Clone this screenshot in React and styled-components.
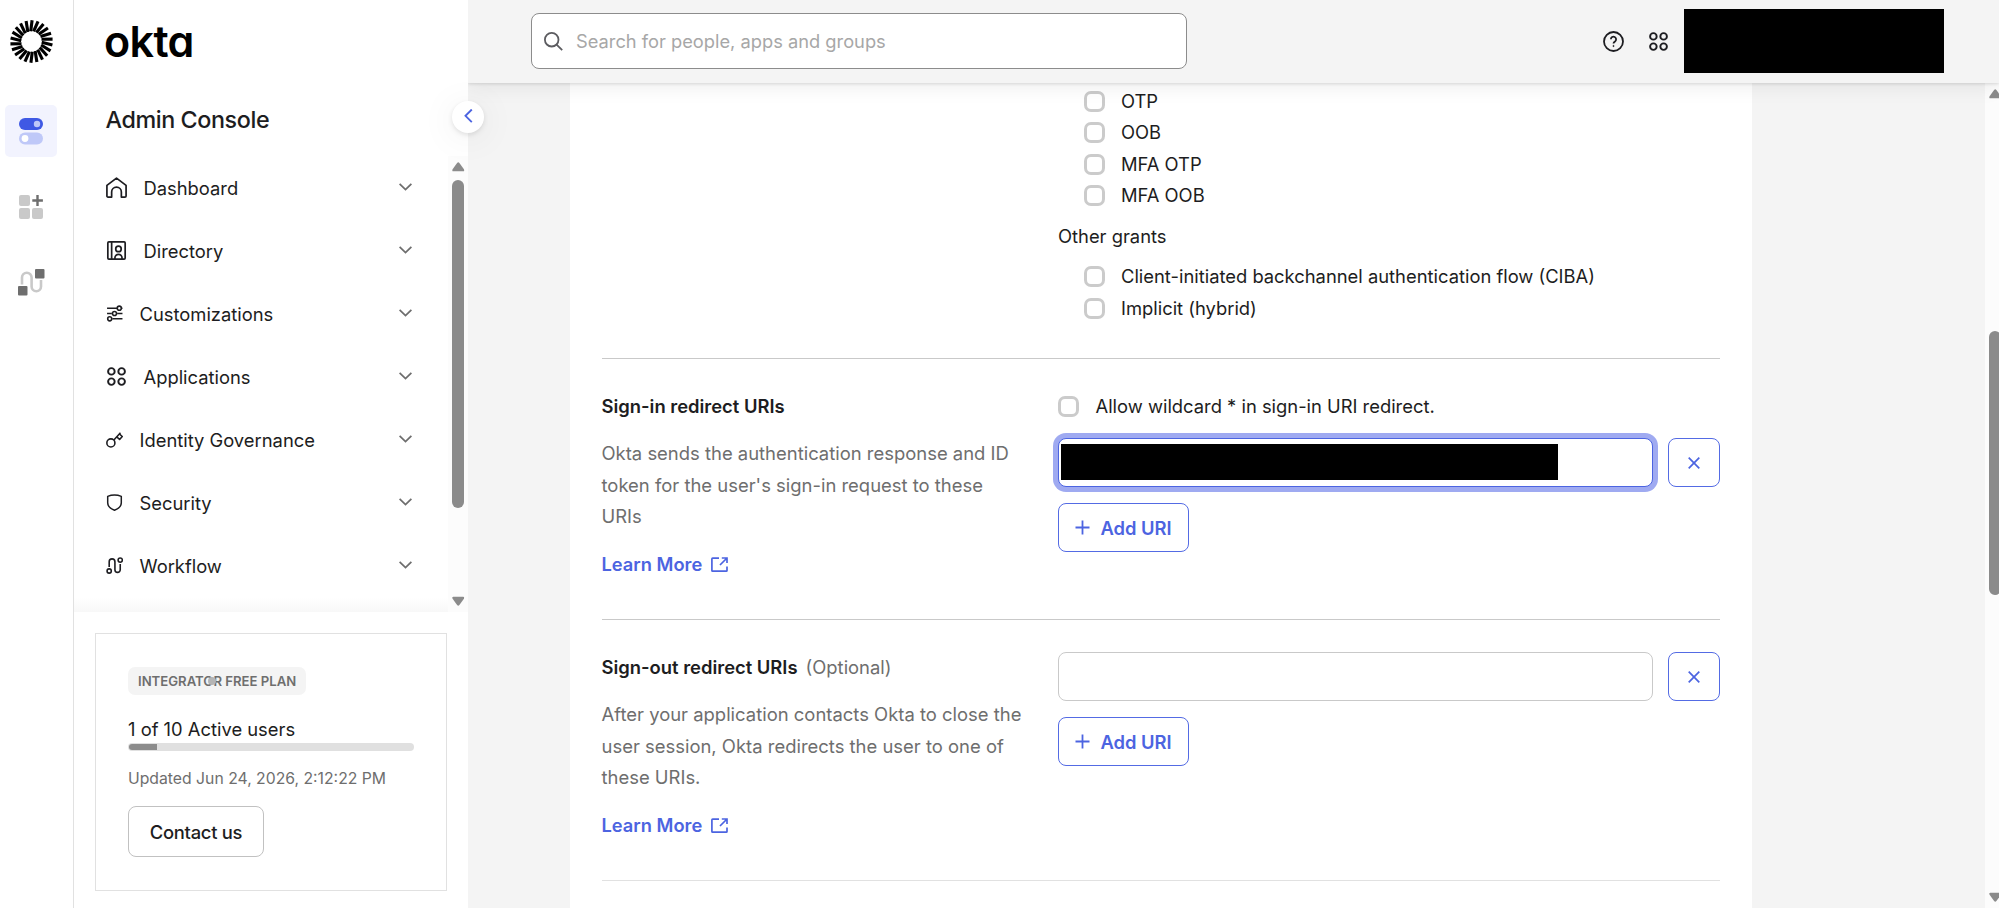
import React from "react";
import styled, { createGlobalStyle } from "styled-components";

const ink = "#1d1d21";
const muted = "#6e6e6e";
const blue = "#4c64e1";
const line = "#e1e1e1";

const GlobalStyle = createGlobalStyle`
  *, *::before, *::after { box-sizing: border-box; }
  html, body { margin: 0; overflow: hidden; }
  body {
    font-family: Inter, "Liberation Sans", sans-serif;
    font-size: 18.375px;
    line-height: 31.5px;
    color: ${ink};
    background: #f4f4f4;
  }
  svg { display: block; flex: none; }
`;

const Page = styled.div`
  position: relative;
  display: grid;
  grid-template-columns: 74px 394px 1fr;
  height: 100vh;
  overflow: hidden;
`;

/* Product rail */
const Rail = styled.aside`
  display: flex;
  flex-direction: column;
  align-items: flex-start;
  padding: 20px 0 0 5px;
  background: #fff;
  border-right: 1px solid ${line};
`;
const RailLogo = styled.div`
  margin: 0 0 42px 4.5px;
`;
const RailItem = styled.button`
  display: flex;
  align-items: center;
  justify-content: center;
  width: 52px;
  height: 52px;
  margin-bottom: 23.5px;
  padding: 0;
  border: 0;
  border-radius: 5px;
  background: ${(p) => (p.$active ? "#f2f3fe" : "transparent")};
`;

/* Side navigation */
const Sidebar = styled.aside`
  position: relative;
  z-index: 3;
  display: flex;
  flex-direction: column;
  min-width: 0;
  background: #fff;
`;
const Brand = styled.div`
  height: 83px;
  padding: 13px 0 0 30px;
  font-size: 43px;
  font-weight: 600;
  line-height: 56px;
  color: #000;
  letter-spacing: -0.6px;
  font-feature-settings: "cv11" 1, "ss01" 0;
`;
const ConsoleTitle = styled.h1`
  height: 73px;
  margin: 0;
  padding: 21px 0 0 31.5px;
  font-size: 23.3px;
  font-weight: 500;
  line-height: 32px;
  letter-spacing: -0.4px;
`;
const NavArea = styled.div`
  display: flex;
  height: 456px;
  overflow: hidden;
`;
const NavList = styled.nav`
  flex: 1;
  display: flex;
  flex-direction: column;
  background: linear-gradient(to top, #f8f8f8 0, #fff 14px);
`;
const NavItem = styled.a`
  display: flex;
  align-items: center;
  flex: none;
  gap: 16.5px;
  height: 63px;
  padding: 0 36px 0 32px;
`;
const NavLabel = styled.span`
  flex: 1;
  padding-top: 1.5px;
`;
const ScrollTrack = styled.div`
  display: flex;
  flex-direction: column;
  align-items: flex-start;
  flex: none;
  width: ${(p) => p.$width}px;
  padding: 6px 0 6px 4px;
  overflow: hidden;
  background: #fcfcfc;
`;
const ScrollThumb = styled.div`
  flex: none;
  width: 12px;
  height: ${(p) => p.$height}px;
  margin-top: ${(p) => p.$offset}px;
  margin-bottom: auto;
  border-radius: 6px;
  background: #8b8b8b;
`;

const PlanCard = styled.section`
  display: flex;
  flex-direction: column;
  align-items: flex-start;
  width: 352px;
  height: 258px;
  margin: 21px 0 0 21px;
  padding: 33px 32px;
  border: 1px solid ${line};
`;
const PlanTag = styled.div`
  position: relative;
  height: 28px;
  padding: 0 10px;
  border-radius: 7px;
  background: #f4f4f4;
  font-size: 13.15px;
  font-weight: 600;
  line-height: 28px;
  color: ${muted};
  white-space: nowrap;
`;
const TagDot = styled.span`
  position: absolute;
  top: 10px;
  left: 80px;
  width: 8px;
  height: 8px;
  border-radius: 50%;
  background: #b5b5b5;
`;
const UserCount = styled.div`
  height: 28px;
  margin-top: 20px;
  line-height: 29px;
`;
const Meter = styled.div`
  width: 286px;
  height: 8px;
  padding: 1px;
  border-radius: 4px;
  background: #e0e0e0;
`;
const MeterFill = styled.div`
  width: 28px;
  height: 6px;
  border-radius: 3px 0 0 3px;
  background: #8c8c8c;
`;
const Updated = styled.div`
  margin-top: 16px;
  font-size: 15.75px;
  line-height: 24px;
  color: ${muted};
`;
const ContactButton = styled.button`
  width: 136px;
  height: 53px;
  margin-top: 15px;
  padding: 0;
  border: 1px solid #c1c1c1;
  border-radius: 8px;
  background: #fff;
  color: ${ink};
  font: 500 18.375px Inter, sans-serif;
  letter-spacing: -0.25px;
`;
const CollapseButton = styled.button`
  position: absolute;
  z-index: 4;
  top: 100.5px;
  left: 452px;
  display: flex;
  align-items: center;
  justify-content: center;
  width: 32px;
  height: 32px;
  padding: 0;
  border: 0;
  border-radius: 50%;
  background: #fff;
  box-shadow: 0 2px 5px rgba(0, 0, 0, 0.1), 0 4px 36px rgba(0, 0, 0, 0.08);
`;

/* Main area */
const Main = styled.div`
  display: flex;
  flex-direction: column;
  min-width: 0;
  height: 908px;
`;
const Header = styled.header`
  position: relative;
  z-index: 2;
  display: flex;
  align-items: center;
  flex: none;
  height: 83px;
  padding: 0 55px 1.5px 63px;
  background: #f4f4f4;
  box-shadow: 0 1px 3px rgba(0, 0, 0, 0.12), 0 3px 20px rgba(0, 0, 0, 0.08);
`;
const SearchBox = styled.label`
  display: flex;
  align-items: center;
  gap: 13px;
  width: 656px;
  height: 56px;
  margin-top: 1px;
  margin-right: auto;
  padding-left: 12px;
  border: 1px solid #8c8c8c;
  border-radius: 8px;
  background: #fff;
`;
const SearchInput = styled.input`
  flex: 1;
  min-width: 0;
  padding: 0;
  border: 0;
  outline: 0;
  background: transparent;
  font: 400 18.3px Inter, sans-serif;
  &::placeholder { color: #a7a7a7; opacity: 1; }
`;
const HeaderIcons = styled.div`
  display: flex;
  align-items: center;
  gap: 24px;
  margin-top: 1px;
  margin-right: 15px;
`;
const AccountBlock = styled.div`
  width: 260px;
  height: 64px;
  background: #000;
`;
const Body = styled.div`
  display: flex;
  flex: 1;
  min-height: 0;
  padding-left: 102px;
`;
const Panel = styled.main`
  flex: none;
  width: 1181.5px;
  margin-right: auto;
  padding: 0 31.5px;
  overflow: hidden;
  background: #fff;
`;
const Section = styled.section`
  display: grid;
  grid-template-columns: 425px 662px;
  justify-content: space-between;
  align-items: start;
  height: ${(p) => p.$height}px;
  padding-top: ${(p) => p.$top}px;
  border-bottom: 1px solid ${(p) => (p.$faint ? "#e1e1e1" : "#c9c9c9")};
`;
const Field = styled.div`
  display: flex;
  flex-direction: column;
  align-items: flex-start;
`;
const CheckList = styled.div`
  padding-left: 25.5px;
`;
const CheckRow = styled.label`
  display: flex;
  align-items: center;
  gap: 16.5px;
  height: 31.5px;
`;
const Box = styled.span`
  flex: none;
  width: 21px;
  height: 21px;
  border: 3px solid #cbcbcb;
  border-radius: 7px;
  background: #fff;
`;
const GroupLabel = styled.div`
  margin: 9px 0;
`;
const FieldTitle = styled.h2`
  margin: 0 0 15.75px;
  font-size: 18.4px;
  font-weight: 600;
  line-height: 31.5px;
`;
const Optional = styled.span`
  margin-left: 8px;
  font-weight: 400;
  color: ${muted};
`;
const Description = styled.p`
  margin: 0 0 15.75px;
  font-size: 18.45px;
  color: ${muted};
`;
const LearnLink = styled.a`
  display: inline-flex;
  align-items: center;
  gap: 8.5px;
  font-size: 18.3px;
  font-weight: 600;
  color: ${blue};
`;
const UriRow = styled.div`
  display: flex;
  gap: 15.5px;
  width: 100%;
  margin: ${(p) => p.$top || 0}px 0 16px;
`;
const UriInput = styled.div`
  flex: 1;
  height: 49px;
  padding: 5px 2px;
  border: 1px solid ${(p) => (p.$focused ? blue : "#c9c9c9")};
  border-radius: 8px;
  background: #fff;
  box-shadow: ${(p) => (p.$focused ? "0 0 0 5px #9faaf1" : "none")};
`;
const Redaction = styled.div`
  width: 496.5px;
  height: 36px;
  background: #000;
`;
const OutlineButton = styled.button`
  display: flex;
  align-items: center;
  justify-content: center;
  gap: 10px;
  width: ${(p) => p.$width}px;
  height: 49px;
  padding: 0;
  border: 1px solid #546be4;
  border-radius: 8px;
  background: #fff;
  color: ${blue};
  font: 600 18.375px Inter, sans-serif;
`;

const rays = Array.from({ length: 22 }, (_, i) => (i * 360) / 22);
const SunLogo = () => (
  <svg width="43" height="43" viewBox="-21.5 -21.5 43 43">
    {rays.map((r) => (
      <line key={r} x1="-0.8" y1="-10.2" x2="0.6" y2="-21.2" stroke="#000" strokeWidth="3.1" transform={`rotate(${r})`} />
    ))}
  </svg>
);
const ToggleIcon = () => (
  <svg width="24" height="28" viewBox="0 0 24 28">
    <rect y="1" width="24" height="12" rx="6" fill="#3f59e4" />
    <circle cx="18" cy="7" r="3.2" fill="#bfc8f8" />
    <rect y="15.5" width="24" height="12" rx="6" fill="#bfc8f8" />
    <circle cx="6" cy="21.5" r="3.4" fill="#fff" />
  </svg>
);
const AddAppsIcon = () => (
  <svg width="24" height="24" viewBox="0 0 24 24">
    <g fill="#c9c9c9">
      <rect width="11" height="11" rx="2" />
      <rect y="13" width="11" height="11" rx="2" />
      <rect x="13" y="13" width="11" height="11" rx="2" />
    </g>
    <path d="M18.5 0v11M13.3 5.5h10.6" stroke="#6e6e6e" strokeWidth="2.4" />
  </svg>
);
const FlowIcon = () => (
  <svg width="28" height="28" viewBox="0 0 28 28">
    <path d="M5 16.5V9.5a4.8 4.8 0 0 1 9.6 0v9a4.7 4.7 0 0 0 9.4 0V12" fill="none" stroke="#c9c9c9" strokeWidth="2.6" />
    <rect x="18" y="1" width="9.5" height="9.5" rx="1" fill="#6e6e6e" />
    <rect x="1" y="18" width="9.5" height="9.5" rx="1" fill="#6e6e6e" />
  </svg>
);

const Glyph = ({ size, children, width = 1.3 }) => (
  <svg width={size} height={size} viewBox="0 0 16 16" fill="none" stroke={ink} strokeWidth={width} strokeLinejoin="round">
    {children}
  </svg>
);
const HomeIcon = () => (
  <Glyph size={21}>
    <path d="M.7 6.4 8 .9l7.3 5.5v8c0 .5-.3.9-.9.9h-2.7v-3.9a3.7 3.7 0 0 0-7.4 0v3.9H1.6c-.6 0-.9-.4-.9-.9z" />
  </Glyph>
);
const DirectoryIcon = () => (
  <Glyph size={21}>
    <rect x="1.4" y="1.4" width="13.2" height="13.2" rx=".8" />
    <path d="M4.3 1.4v13.2M6.8 14.4v-.8a2.7 2.7 0 0 1 5.4 0v.8" />
    <circle cx="9.5" cy="6.8" r="2.1" />
  </Glyph>
);
const SlidersIcon = () => (
  <Glyph size={17} width={1.5}>
    <path d="M1 3h9.5M14.5 3h1M1 8h4.5M10.5 8h5M6 13h9.5" />
    <circle cx="12.5" cy="3" r="1.9" />
    <circle cx="8" cy="8" r="1.9" />
    <circle cx="3.5" cy="13" r="1.9" />
  </Glyph>
);
const AppsIcon = () => (
  <Glyph size={21} width={1.45}>
    <circle cx="4.1" cy="4.1" r="2.5" />
    <circle cx="11.9" cy="4.1" r="2.5" />
    <circle cx="4.1" cy="11.9" r="2.5" />
    <circle cx="11.9" cy="11.9" r="2.5" />
  </Glyph>
);
const KeyIcon = () => (
  <Glyph size={17} width={1.5}>
    <circle cx="4.6" cy="11.2" r="3.8" />
    <path d="m7.4 8.4 6.2-6.8M10.2 5.5l2.6 2.5 2.5-2.8-2.6-2.4" />
  </Glyph>
);
const ShieldIcon = () => (
  <Glyph size={17} width={1.4}>
    <path d="M8 .9c2.2 0 4.5.5 6.4 1.3v6c0 3-2.5 5.6-6.4 7.1C4.1 13.8 1.6 11.2 1.6 8.2v-6C3.5 1.4 5.8.9 8 .9z" />
  </Glyph>
);
const WorkflowIcon = () => (
  <Glyph size={17} width={1.5}>
    <path d="M3 9.5v-5a2.7 2.7 0 0 1 5.4 0V12a2.5 2.5 0 0 0 5 0V6.5" />
    <circle cx="13.4" cy="2.9" r="2" />
    <circle cx="3" cy="13.2" r="2" />
  </Glyph>
);
const ChevronDown = () => (
  <svg width="13" height="10" viewBox="0 0 13 10" fill="none" stroke={muted} strokeWidth="1.8">
    <path d="m.6.8 5.9 5.8L12.4.8" />
  </svg>
);
const ChevronLeft = () => (
  <svg width="9" height="15" viewBox="0 0 9 15" fill="none" stroke={blue} strokeWidth="1.9">
    <path d="M7.800.5 1.500 6.800l6.300 6.300" />
  </svg>
);
const ScrollArrow = ({ down }) => (
  <svg width="12.5" height="10" viewBox="0 0 13 10" fill="#8b8b8b" transform={down ? "rotate(180)" : undefined}>
    <path d="M5.300.8q1.200-1.300 2.400 0l4.700 6.500q.9 2.200-.9 2.200h-10q-1.800 0-.9-2.200z" />
  </svg>
);
const SearchIcon = () => (
  <svg width="19" height="19" viewBox="0 0 19 19" fill="none" stroke="#5c5c60" strokeWidth="1.8">
    <circle cx="7.7" cy="7.7" r="6.8" />
    <path d="m12.6 12.6 5.6 5.6" />
  </svg>
);
const HelpIcon = () => (
  <svg width="21" height="21" viewBox="0 0 21 21" fill="none" stroke={ink} strokeWidth="1.8">
    <circle cx="10.5" cy="10.5" r="9.5" />
    <path d="M7.9 8.3a2.6 2.6 0 1 1 4.1 2.1c-.9.6-1.5 1-1.5 2.1" />
    <circle cx="10.5" cy="15" r=".6" fill={ink} strokeWidth=".8" />
  </svg>
);
const PlusIcon = () => (
  <svg width="15" height="15" viewBox="0 0 15 15" stroke={blue} strokeWidth="1.8">
    <path d="M7.5.5v14M.5 7.5h14" />
  </svg>
);
const CloseIcon = () => (
  <svg width="12" height="12" viewBox="0 0 12 12" stroke={blue} strokeWidth="1.7">
    <path d="m.7.7 10.6 10.6M11.3.7.7 11.3" />
  </svg>
);
const ExternalIcon = () => (
  <svg width="17" height="15" viewBox="0 0 17 15" fill="none" stroke={blue} strokeWidth="1.7">
    <path d="M8 1.2H1.6a.7.7 0 0 0-.7.7v11.500c0 .4.3.7.7.7h13.700c.4 0 .7-.3.700-.7V9.500M10.800 1H16v5M16 1 9 8" />
  </svg>
);

const navItems = [
  ["Dashboard", HomeIcon],
  ["Directory", DirectoryIcon],
  ["Customizations", SlidersIcon],
  ["Applications", AppsIcon],
  ["Identity Governance", KeyIcon],
  ["Security", ShieldIcon],
  ["Workflow", WorkflowIcon],
];

const Check = ({ children }) => (
  <CheckRow>
    <Box />
    <span>{children}</span>
  </CheckRow>
);

const AddUri = () => (
  <OutlineButton $width={131}>
    <PlusIcon />
    Add URI
  </OutlineButton>
);

const Uri = ({ focused, top, children }) => (
  <UriRow $top={top}>
    <UriInput $focused={focused}>{children}</UriInput>
    <OutlineButton $width={52} aria-label="Remove">
      <CloseIcon />
    </OutlineButton>
  </UriRow>
);

const Learn = () => (
  <LearnLink>
    Learn More
    <ExternalIcon />
  </LearnLink>
);

export default function App() {
  return (
    <Page>
      <GlobalStyle />
      <Rail>
        <RailLogo><SunLogo /></RailLogo>
        <RailItem $active><ToggleIcon /></RailItem>
        <RailItem><AddAppsIcon /></RailItem>
        <RailItem><FlowIcon /></RailItem>
      </Rail>

      <Sidebar>
        <Brand>okta</Brand>
        <ConsoleTitle>Admin Console</ConsoleTitle>
        <NavArea>
          <NavList>
            {navItems.map(([label, Icon]) => (
              <NavItem key={label}>
                <Icon />
                <NavLabel>{label}</NavLabel>
                <ChevronDown />
              </NavItem>
            ))}
          </NavList>
          <ScrollTrack $width={20}>
            <ScrollArrow />
            <ScrollThumb $height={328} $offset={8} />
            <ScrollArrow down />
          </ScrollTrack>
        </NavArea>
        <PlanCard>
          <PlanTag>
            INTEGRATOR FREE PLAN
            <TagDot />
          </PlanTag>
          <UserCount>1 of 10 Active users</UserCount>
          <Meter><MeterFill /></Meter>
          <Updated>Updated Jun 24, 2026, 2:12:22 PM</Updated>
          <ContactButton>Contact us</ContactButton>
        </PlanCard>
      </Sidebar>

      <Main>
        <Header>
          <SearchBox>
            <SearchIcon />
            <SearchInput placeholder="Search for people, apps and groups" />
          </SearchBox>
          <HeaderIcons>
            <HelpIcon />
            <AppsIcon />
          </HeaderIcons>
          <AccountBlock />
        </Header>
        <Body>
          <Panel>
            <Section $height={276} $top={2.5}>
              <div />
              <div>
                <CheckList>
                  <Check>OTP</Check>
                  <Check>OOB</Check>
                  <Check>MFA OTP</Check>
                  <Check>MFA OOB</Check>
                </CheckList>
                <GroupLabel>Other grants</GroupLabel>
                <CheckList>
                  <Check>Client-initiated backchannel authentication flow (CIBA)</Check>
                  <Check>Implicit (hybrid)</Check>
                </CheckList>
              </div>
            </Section>
            <Section $height={261} $top={32}>
              <div>
                <FieldTitle>Sign-in redirect URIs</FieldTitle>
                <Description>
                  Okta sends the authentication response and ID token for the user's sign-in request to these URIs
                </Description>
                <Learn />
              </div>
              <Field>
                <Check>Allow wildcard * in sign-in URI redirect.</Check>
                <Uri focused top={15.5}><Redaction /></Uri>
                <AddUri />
              </Field>
            </Section>
            <Section $height={261} $top={32} $faint>
              <div>
                <FieldTitle>
                  Sign-out redirect URIs<Optional>(Optional)</Optional>
                </FieldTitle>
                <Description>
                  After your application contacts Okta to close the user session, Okta redirects the user to one of
                  these URIs.
                </Description>
                <Learn />
              </div>
              <Field>
                <Uri />
                <AddUri />
              </Field>
            </Section>
          </Panel>
          <ScrollTrack $width={14.5}>
            <ScrollArrow />
            <ScrollThumb $height={264} $offset={232} />
            <ScrollArrow down />
          </ScrollTrack>
        </Body>
      </Main>
      <CollapseButton aria-label="Collapse navigation"><ChevronLeft /></CollapseButton>
    </Page>
  );
}
